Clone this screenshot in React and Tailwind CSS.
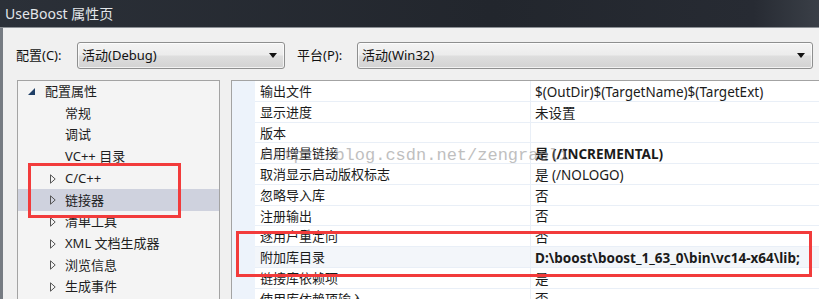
const UI_FONT = { fontFamily: '"Noto Sans", "Noto Sans CJK SC", sans-serif' };

const treeItems = [
  { label: "配置属性", kind: "open" },
  { label: "常规" },
  { label: "调试" },
  { label: "VC++ 目录" },
  { label: "C/C++", kind: "closed" },
  { label: "链接器", kind: "closed", selected: true },
  { label: "清单工具", kind: "closed" },
  { label: "XML 文档生成器", kind: "closed" },
  { label: "浏览信息", kind: "closed" },
  { label: "生成事件", kind: "closed" },
];

const gridRows = [
  { name: "输出文件", value: "$(OutDir)$(TargetName)$(TargetExt)" },
  { name: "显示进度", value: "未设置" },
  { name: "版本", value: "" },
  { name: "启用增量链接", value: "是 (/INCREMENTAL)", bold: true },
  { name: "取消显示启动版权标志", value: "是 (/NOLOGO)" },
  { name: "忽略导入库", value: "否" },
  { name: "注册输出", value: "否" },
  { name: "逐用户重定向", value: "否" },
  { name: "附加库目录", value: "D:\\boost\\boost_1_63_0\\bin\\vc14-x64\\lib;", bold: true, active: true },
  { name: "链接库依赖项", value: "是" },
  { name: "使用库依赖项输入", value: "否" },
];

function DropArrow() {
  return (
    <svg width="8" height="5" viewBox="0 0 8 5" className="shrink-0">
      <path d="M0 0 L8 0 L4 5 Z" fill="#111" />
    </svg>
  );
}

function Combo({ text, width }) {
  return (
    <div
      className={`${width} h-[27px] flex items-center justify-between pl-[4px] pr-[7px] rounded-[3px] border border-[#8e8f8f] bg-[linear-gradient(to_bottom,#f4f4f4_0%,#ececec_48%,#dedede_52%,#d2d2d2_100%)] shadow-[inset_0_0_0_1px_rgba(255,255,255,0.7)] text-[13px] text-[#111]`}
    >
      <span>{text}</span>
      <DropArrow />
    </div>
  );
}

function TreeIcon({ kind }) {
  if (kind === "open") {
    return (
      <svg width="7" height="7" viewBox="0 0 7 7">
        <path d="M7 0 L7 7 L0 7 Z" fill="#1f3f66" />
      </svg>
    );
  }
  if (kind === "closed") {
    return (
      <svg width="6" height="10" viewBox="0 0 6 10">
        <path d="M0.5 0.8 L5.2 5 L0.5 9.2 Z" fill="none" stroke="#555" strokeWidth="1" />
      </svg>
    );
  }
  return null;
}

export default function App() {
  return (
    <div className="w-[819px] h-[299px] overflow-hidden relative flex flex-col bg-[#f0f0f0]" style={UI_FONT}>
      {/* title bar */}
      <div className="h-[28px] shrink-0 flex items-center pl-[5px] bg-[linear-gradient(to_right,#2b3038,#22262d_60%,#272b33_92%,#3a3f47)] border-b border-[#8c9095] text-[14px] text-[#e2e6ea]">
        UseBoost 属性页
      </div>

      <div className="flex-1 flex flex-col border-l-[3px] border-[#767b82] min-h-0">
        {/* config / platform bar */}
        <div className="h-[52px] shrink-0 flex items-center pl-[13px] pt-[3px] text-[13px] text-[#111]">
          <span className="w-[61px]">配置(C):</span>
          <Combo text="活动(Debug)" width="w-[208px]" />
          <span className="w-[60px] ml-[12px]">平台(P):</span>
          <Combo text="活动(Win32)" width="w-[456px]" />
        </div>

        <div className="flex-1 flex min-h-0 pl-[14px]">
          {/* tree */}
          <div className="w-[203px] border border-b-0 border-[#a3a3a3] bg-[#f4f4f4] text-[13px] text-[#1e1e1e]">
            {treeItems.map((it) => (
              <div
                key={it.label}
                className={`h-[21.7px] flex items-center ${it.selected ? "bg-[#cfd2de]" : ""}`}
              >
                {it.kind === "open" ? (
                  <div className="w-[27px] pl-[10px] flex items-center">
                    <TreeIcon kind="open" />
                  </div>
                ) : (
                  <div className="w-[47px] pl-[32px] flex items-center">
                    <TreeIcon kind={it.kind} />
                  </div>
                )}
                <span>{it.label}</span>
              </div>
            ))}
          </div>

          {/* property grid */}
          <div className="flex-1 ml-[11px] border-t border-l border-[#a3a3a3] bg-white flex min-h-0">
            <div className="w-[23px] bg-[#edf3fb] shrink-0" />
            <div className="flex-1 flex flex-col text-[13px] text-[#1b1b1b]">
              {gridRows.map((r) => (
                <div
                  key={r.name}
                  className={`h-[20.75px] shrink-0 flex border-b border-[#e9eff7] ${r.active ? "bg-[#f3f6fa]" : ""}`}
                >
                  <div className="w-[276px] pl-[5px] pt-[2px] flex items-center border-r border-[#e9eff7]">{r.name}</div>
                  <div className={`flex-1 pl-[4px] pt-[2px] flex items-center text-[13.5px] ${r.bold ? "font-bold" : ""}`}>
                    {r.value}
                  </div>
                </div>
              ))}
            </div>
          </div>
        </div>
      </div>

      {/* watermark */}
      <div
        className="absolute left-[263px] top-[143px] text-[17px] text-[#8c8c8c] opacity-55 pointer-events-none whitespace-nowrap"
        style={{ fontFamily: '"Liberation Mono", monospace' }}
      >
        http://blog.csdn.net/zengraoli
      </div>

      {/* annotation boxes */}
      <div className="absolute left-[28px] top-[163px] w-[153px] h-[55px] border-[3px] border-[#f23b3b] pointer-events-none" />
      <div className="absolute left-[236px] top-[231px] w-[576px] h-[46px] border-[3px] border-[#f23b3b] pointer-events-none" />
    </div>
  );
}
